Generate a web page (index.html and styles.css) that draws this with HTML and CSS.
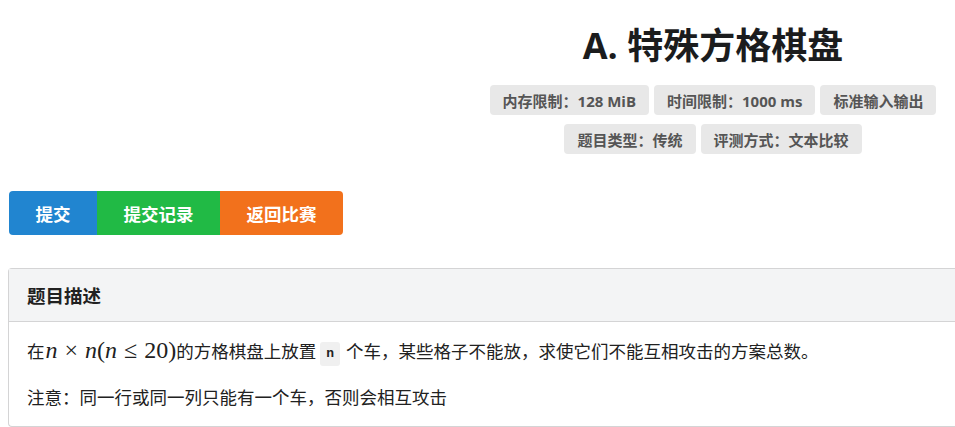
FILE: index.html
```html
<!DOCTYPE html>
<html lang="zh-CN">
  <head>
    <meta charset="UTF-8" />
    <meta name="viewport" content="width=device-width, initial-scale=1.0" />
    <title>A. 特殊方格棋盘</title>
    <link rel="stylesheet" href="styles.css">
  </head>
  <body>
    <div class="page">
      <div class="header">
        <h1 class="title">A. 特殊方格棋盘</h1>
        <div class="labels">
          <span class="label">内存限制：128 MiB</span>
          <span class="label">时间限制：1000 ms</span>
          <span class="label">标准输入输出</span>
        </div>
        <div class="labels">
          <span class="label">题目类型：传统</span>
          <span class="label">评测方式：文本比较</span>
        </div>
      </div>

      <div class="buttons">
        <a class="btn blue" href="#">提交</a>
        <a class="btn green" href="#">提交记录</a>
        <a class="btn orange" href="#">返回比赛</a>
      </div>

      <div class="panel">
        <div class="panel-header">题目描述</div>
        <div class="panel-body">
          <p>在<span class="math"><i>n</i><span class="op">×</span><i>n</i>(<i>n</i><span class="op">≤</span>20)</span>的方格棋盘上放置<code>n</code>个车，某些格子不能放，求使它们不能互相攻击的方案总数。</p>
          <p>注意：同一行或同一列只能有一个车，否则会相互攻击</p>
        </div>
      </div>
    </div>
  </body>
</html>
```

FILE: styles.css
```css
html {
  overflow: hidden;
}
body {
  margin: 8px 0 8px 8px;
  font-family: "Open Sans", "Noto Sans CJK SC", sans-serif;
  color: #212121;
  background: #fff;
}
/* the page column is wider than the window; its centre sits at x=713 */
.header {
  padding-left: 463px;
  text-align: center;
}
.title {
  margin: 13px 0 14px;
  font-size: 36px;
  line-height: 50px;
  font-weight: 700;
  color: #1b1c1d;
}
.labels {
  display: flex;
  justify-content: center;
  gap: 5px;
  margin-bottom: 9px;
}
.label {
  display: inline-flex;
  align-items: center;
  height: 30px;
  padding: 0 13px;
  font-size: 15px;
  font-weight: 700;
  color: #555;
  background: #e8e8e8;
  border-radius: 4px;
}
.buttons {
  display: flex;
  margin: 37px 0 33px 1px;
}
.btn {
  display: flex;
  align-items: center;
  height: 44px;
  padding: 0 26.5px;
  font-size: 17.5px;
  font-weight: 700;
  color: #fff;
  text-decoration: none;
}
.btn:first-child {
  border-radius: 4px 0 0 4px;
}
.btn:last-child {
  border-radius: 0 4px 4px 0;
}
.blue {
  background: #2185d0;
}
.green {
  background: #21ba45;
}
.orange {
  background: #f2711c;
}
.panel {
  border: 1px solid #d4d4d5;
  border-right: 0;
  border-radius: 4px 0 0 4px;
}
.panel-header {
  height: 52px;
  display: flex;
  align-items: center;
  padding: 0 18px;
  font-size: 18.5px;
  font-weight: 700;
  background: #f3f4f5;
  border-bottom: 1px solid #d4d4d5;
}
.panel-body {
  padding: 16px 18px 15px;
  font-size: 17.5px;
}
.panel-body p {
  margin: 0 0 18px;
  line-height: 27px;
}
.panel-body p:last-child {
  margin-bottom: 0;
}
.math {
  margin-left: 1px;
  font-family: "Liberation Serif", "DejaVu Serif", serif;
  font-size: 24px;
  line-height: 1;
}
.math i {
  font-style: italic;
}
.math .op {
  margin: 0 7px;
}
code {
  display: inline-block;
  margin: 0 6px 0 4px;
  padding: 0 6px;
  font-family: "Liberation Mono", monospace;
  font-size: 13px;
  font-weight: 700;
  line-height: 24px;
  background: #f0f0f0;
  border-radius: 3px;
  vertical-align: 1px;
}
```
